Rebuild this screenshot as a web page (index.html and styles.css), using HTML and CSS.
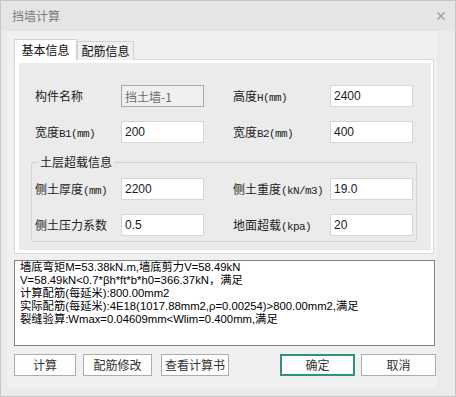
FILE: index.html
```html
<!DOCTYPE html>
<html>
<head>
<meta charset="utf-8">
<title>挡墙计算</title>
<link rel="stylesheet" href="styles.css">
</head>
<body>
<div class="window">
  <div class="titlebar">
    <span class="title">挡墙计算</span>
    <svg class="close" width="8" height="8" viewBox="0 0 8 8"><path d="M0.5 0.5L7.5 7.5M7.5 0.5L0.5 7.5" stroke="#9a9a9a" stroke-width="1.3" fill="none"/></svg>
  </div>
  <div class="body">
    <div class="panel">
      <div class="tabs">
        <div class="tab active">基本信息</div>
        <div class="tab">配筋信息</div>
      </div>
      <div class="tab-content">
        <div class="tab-inner">
          <div class="grid top">
            <div class="label">构件名称</div>
            <div class="input disabled">挡土墙-1</div>
            <div class="label">高度<span class="en">H(mm)</span></div>
            <div class="input">2400</div>
            <div class="label">宽度<span class="en">B1(mm)</span></div>
            <div class="input">200</div>
            <div class="label">宽度<span class="en">B2(mm)</span></div>
            <div class="input">400</div>
          </div>
          <fieldset class="group">
            <legend>土层超载信息</legend>
            <div class="grid">
              <div class="label">侧土厚度<span class="en">(mm)</span></div>
              <div class="input">2200</div>
              <div class="label">侧土重度<span class="en">(kN/m3)</span></div>
              <div class="input">19.0</div>
              <div class="label">侧土压力系数</div>
              <div class="input">0.5</div>
              <div class="label">地面超载<span class="en">(kpa)</span></div>
              <div class="input">20</div>
            </div>
          </fieldset>
        </div>
      </div>
      <div class="output">
        <div>墙底弯矩M=53.38kN.m,墙底剪力V=58.49kN</div>
        <div>V=58.49kN&lt;0.7*βh*ft*b*h0=366.37kN，满足</div>
        <div>计算配筋(每延米):800.00mm2</div>
        <div>实际配筋(每延米):4E18(1017.88mm2,ρ=0.00254)&gt;800.00mm2,满足</div>
        <div>裂缝验算:Wmax=0.04609mm&lt;Wlim=0.400mm,满足</div>
      </div>
      <div class="buttons">
        <div class="btn b-calc">计算</div>
        <div class="btn b-edit">配筋修改</div>
        <div class="btn b-book">查看计算书</div>
        <div class="btn b-ok">确定</div>
        <div class="btn b-cancel">取消</div>
      </div>
    </div>
  </div>
</div>
</body>
</html>
```

FILE: styles.css
```css
* { box-sizing: border-box; }
html, body { margin: 0; padding: 0; }
body {
  width: 456px;
  height: 397px;
  overflow: hidden;
  font-family: "Noto Sans CJK SC", sans-serif;
  font-size: 12px;
  color: #222;
  background: #ebebeb;
}
.window {
  width: 456px;
  height: 397px;
  border: 1px solid #c6c6c6;
  background: #ebebeb;
  display: flex;
  flex-direction: column;
}
.titlebar {
  height: 30px;
  flex: none;
  background: #e5e5e5;
  display: flex;
  align-items: center;
  justify-content: space-between;
  padding: 0 10px 0 11px;
}
.title {
  color: #7a7a7a;
  font-size: 12px;
  line-height: 16px;
}
.close { display: block; }
.body {
  flex: 1;
  padding-left: 6px;
}
.panel {
  width: 430px;
  height: 357px;
  background: #f0f0f0;
  padding: 8px 0 0 7px;
}
.tabs {
  display: flex;
  align-items: flex-end;
  height: 21px;
  margin-bottom: -1px;
  position: relative;
  z-index: 1;
}
.tab {
  height: 19px;
  width: 57px;
  border: 1px solid #d2d2d2;
  border-bottom: none;
  background: #f0f0f0;
  display: flex;
  align-items: center;
  justify-content: center;
  line-height: 16px;
  color: #111;
}
.tab.active {
  height: 21px;
  width: 63px;
  background: #fff;
  padding-bottom: 1px;
}
.tab-content {
  width: 420px;
  height: 195px;
  border: 1px solid #d9d9d9;
  background: #fff;
  padding: 3px 2px 3px 4px;
}
.tab-inner {
  height: 100%;
  background: #ebebeb;
  padding: 22px 7px 0 12px;
}
.grid {
  display: grid;
  grid-template-columns: 86px 112px 97px 83px;
  grid-auto-rows: 22px;
  row-gap: 14px;
}
.grid.top { margin-left: 4px; }
.label {
  display: block;
  white-space: nowrap;
  color: #222;
  line-height: 22px;
}
.en {
  font-family: "Liberation Mono", monospace;
  font-size: 11px;
  letter-spacing: -0.6px;
}
.input {
  width: 83px;
  height: 22px;
  border: 1px solid #d6d6d6;
  background: #fff;
  padding: 0 3px;
  display: flex;
  align-items: center;
  font-family: "Liberation Sans", "Noto Sans CJK SC", sans-serif;
  font-size: 12px;
  color: #1a1a2a;
}
.input.disabled {
  background: #f0f0f0;
  border-color: #a9a9a9;
  color: #6a6a6a;
  font-family: "Noto Sans CJK SC", sans-serif;
}
.group {
  margin: 11px 7px 8px 0;
  padding: 8px 0 5px 3px;
  border: 1px solid #d3d3d3;
  border-radius: 3px;
  min-inline-size: 0;
}
.group legend {
  padding: 0 2px;
  margin-left: 3px;
  line-height: 16px;
  font-size: 12px;
  color: #222;
}
.output {
  margin-top: 6px;
  width: 421px;
  height: 86px;
  border: 1px solid #7f7f7f;
  background: #fff;
  padding: 0 0 0 5px;
  font-family: "Liberation Sans", "Noto Sans CJK SC", sans-serif;
  font-size: 11.3px;
  line-height: 13px;
  color: #000;
  white-space: nowrap;
  overflow: hidden;
}
.buttons {
  margin-top: 8px;
  width: 422px;
  display: flex;
}
.btn {
  height: 22px;
  border: 1px solid #adadad;
  background: #fdfdfd;
  display: flex;
  align-items: center;
  justify-content: center;
  color: #333;
  line-height: 16px;
}
.b-calc { width: 62px; }
.b-edit { width: 69px; margin-left: 7px; }
.b-book { width: 68px; margin-left: 9px; }
.b-ok { width: 75px; margin-left: auto; border: 2px solid #31917f; }
.b-cancel { width: 75px; margin-left: 6px; }
```
